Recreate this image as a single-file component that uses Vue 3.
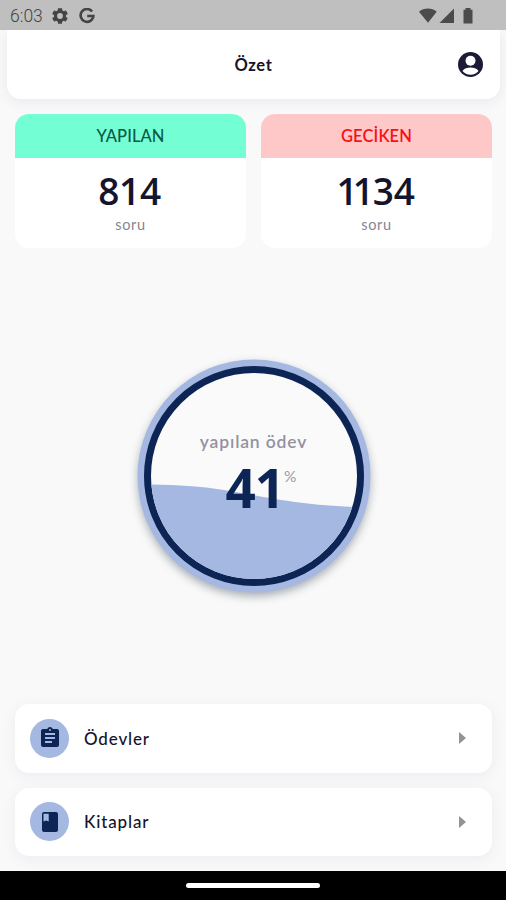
<script setup>
const stats = [
  { title: 'YAPILAN', lead: '', value: '814', tone: 'done' },
  { title: 'GECİKEN', lead: '11', value: '34', tone: 'late' },
]
const links = [
  {
    label: 'Ödevler',
    icon: 'M19 3h-4.2a3 3 0 0 0-5.6 0H5a2 2 0 0 0-2 2v14a2 2 0 0 0 2 2h14a2 2 0 0 0 2-2V5a2 2 0 0 0-2-2zm-7 0a1 1 0 1 1 0 2 1 1 0 0 1 0-2zm2 14H7v-2h7zm3-4H7v-2h10zm0-4H7V7h10z',
  },
  {
    label: 'Kitaplar',
    icon: 'M18 2H6a2 2 0 0 0-2 2v16a2 2 0 0 0 2 2h12a2 2 0 0 0 2-2V4a2 2 0 0 0-2-2zM5.5 3.8h5.2v7.8l-2.6-1.2L5.5 11.6z',
  },
]
</script>

<template>
  <div class="screen">
    <div class="status">
      <span class="clock">6:03</span>
      <svg class="gear" viewBox="2 2 20 20"><path fill-rule="evenodd" d="M19.4 13c.04-.3.06-.6.06-1s-.02-.7-.07-1l2.1-1.6c.2-.15.24-.4.12-.6l-2-3.5c-.12-.2-.37-.3-.6-.2l-2.4 1c-.5-.4-1.05-.7-1.65-.95l-.36-2.5A.5.5 0 0 0 14 2.2h-4a.5.5 0 0 0-.5.4l-.4 2.6c-.6.25-1.15.57-1.65.94l-2.4-1c-.2-.1-.47 0-.6.2l-2 3.5c-.12.2-.07.46.12.6L4.6 11a8 8 0 0 0 0 2l-2.03 1.6c-.18.14-.23.4-.12.6l2 3.5c.12.2.37.28.6.2l2.4-1c.5.4 1.04.7 1.64.95l.36 2.5c.05.25.25.45.5.45h4c.26 0 .47-.2.5-.43l.36-2.55c.6-.24 1.14-.56 1.64-.94l2.4 1c.2.1.47 0 .6-.2l2-3.46c.1-.2.07-.47-.13-.6zM12 15.6a3.6 3.6 0 1 1 0-7.2 3.6 3.6 0 0 1 0 7.2z" /></svg>
      <svg class="google" viewBox="0 0 16 16"><path d="M13.1 3.5A6.4 6.4 0 1 0 14.4 8H8.2" /></svg>
      <svg class="signals" viewBox="0 0 54 16">
        <path d="M0 3.7C4.8-.5 13-.5 17.7 3.7L9 14.7zM20.5 15L35 .5V15zM44.5 1.8h2V0h5v1.8h2V15.5h-9z" />
      </svg>
    </div>
    <header class="header">
      <span class="title">Özet</span>
      <svg class="account" viewBox="2 2 20 20">
        <circle cx="12" cy="12" r="10" />
        <circle class="cut" cx="12" cy="9" r="4" />
        <path class="cut" d="M5.6 17.2c1.3-2.2 3.9-2.8 6.4-2.8s5.1.6 6.4 2.8c-1.4 1.9-3.8 3-6.4 3s-5-1.1-6.4-3z" />
      </svg>
    </header>
    <section class="stats">
      <article v-for="s in stats" :key="s.title" class="stat">
        <div class="stat-head" :class="s.tone">{{ s.title }}</div>
        <div class="number"><span v-if="s.lead" class="lead">{{ s.lead }}</span>{{ s.value }}</div>
        <div class="unit">soru</div>
      </article>
    </section>
    <main class="gauge-area">
      <div class="gauge">
        <svg class="wave" viewBox="0 0 206 206">
          <path d="M0 111.5C28 112 49 113 73 117C111 123 145 132 206 134V206H0z" />
        </svg>
        <div class="reading">
          <span class="caption">yapılan ödev</span>
          <div class="percent"><span class="amount">41</span><span class="sign">%</span></div>
        </div>
      </div>
    </main>
    <nav class="links">
      <div v-for="l in links" :key="l.label" class="link">
        <span class="badge"><svg viewBox="0 0 24 24"><path fill-rule="evenodd" :d="l.icon" /></svg></span>
        <span class="label">{{ l.label }}</span>
        <svg class="arrow" viewBox="0 0 7 12"><path d="M0 0L7 6L0 12z" /></svg>
      </div>
    </nav>
    <footer class="system"><span class="handle"></span></footer>
  </div>
</template>

<style>
body { margin: 0; }
</style>

<style scoped>
.screen {
  width: 506px; height: 900px; box-sizing: border-box; overflow: hidden;
  display: flex; flex-direction: column;
  background: #f9f9f9; color: #14142d;
  font-family: Lato, "Noto Sans", sans-serif;
}
.status {
  flex: none; height: 30px; box-sizing: border-box; padding: 1px 33px 0 10px;
  display: flex; align-items: center; background: #bfbfbf; z-index: 1;
}
.clock { width: 42px; font: 300 17.5px Roboto, sans-serif; color: #444; }
.gear { width: 16px; height: 16px; fill: #444; }
.google { width: 16px; height: 16px; margin-left: 11px; fill: none; stroke: #444; stroke-width: 2.6; }
.signals { width: 54px; height: 16px; margin-left: auto; fill: #4b4b4b; }
.header {
  flex: none; height: 69px; margin: 0 6px 0 7px; position: relative;
  display: flex; align-items: center; justify-content: center;
  background: #fff; border-radius: 0 0 14px 14px; box-shadow: 0 3px 14px #e9e9ef;
}
.title { font-size: 16.5px; font-weight: 700; letter-spacing: .6px; }
.account { position: absolute; right: 17px; top: 22px; width: 25px; height: 25px; fill: #1b1a37; }
.account .cut { fill: #fff; }
.stats { flex: none; display: flex; gap: 15px; padding: 15px 14px 0 15px; }
.stat {
  flex: 1; height: 134px; border-radius: 14px; overflow: hidden; background: #fff;
  display: flex; flex-direction: column; align-items: center;
}
.stat-head {
  width: 100%; height: 44px; line-height: 44px; text-align: center;
  font-size: 16.5px; font-weight: 500; letter-spacing: .1px;
}
.done { background: #73ffd3; color: #0d5848; }
.late { background: #ffc8c8; color: #f91016; font-weight: 600; }
.number { margin: 8px 2px 1px 0; font-family: "Open Sans", "Noto Sans", sans-serif; font-size: 37px; line-height: 49px; font-weight: 600; letter-spacing: -.3px; }
.lead { letter-spacing: -5px; margin-right: 4px; }
.unit { font-size: 14.5px; line-height: 18px; color: #85858f; letter-spacing: .6px; }
.gauge-area { flex: 1; display: flex; justify-content: center; align-items: center; padding-left: 1px; }
.gauge {
  width: 206px; height: 206px; border: 7px solid #0d2555; border-radius: 50%;
  display: grid; background: #fafafa;
  box-shadow: 0 0 0 6.5px #a5b8e2, 0 4px 10px 6px #a4aab0;
}
.wave { grid-area: 1 / 1; width: 206px; height: 206px; border-radius: 50%; fill: #a5b8e2; }
.reading { grid-area: 1 / 1; z-index: 1; display: flex; flex-direction: column; align-items: center; padding-top: 58px; }
.caption { font-size: 17.5px; line-height: 22px; font-weight: 600; letter-spacing: .85px; color: #9292a2; }
.percent { display: flex; margin-left: 15px; }
.amount { color: #0d2555; font: 700 53px/69px "Open Sans", "Noto Sans", sans-serif; letter-spacing: -1px; }
.sign { font-size: 15.5px; line-height: 20px; color: #999aa5; margin-top: 13px; }
.links { flex: none; display: flex; flex-direction: column; gap: 15px; padding: 0 14px 15px 15px; }
.link {
  height: 68.5px; box-sizing: border-box; padding: 0 26px 0 15px;
  display: flex; align-items: center; border-radius: 14px;
  background: #fff; box-shadow: 0 3px 14px #ececf2;
}
.badge { width: 39px; height: 39px; border-radius: 50%; background: #a5b8e2; display: grid; place-items: center; }
.badge svg { width: 24px; height: 24px; fill: #0d2555; }
.label { margin-left: 15px; font-size: 17px; font-weight: 500; letter-spacing: .85px; }
.arrow { width: 7px; height: 12px; margin-left: auto; fill: #929298; }
.system { flex: none; height: 29px; background: #000; display: flex; justify-content: center; z-index: 1; }
.handle { width: 134px; height: 5px; margin-top: 12px; border-radius: 3px; background: #fff; }
</style>
